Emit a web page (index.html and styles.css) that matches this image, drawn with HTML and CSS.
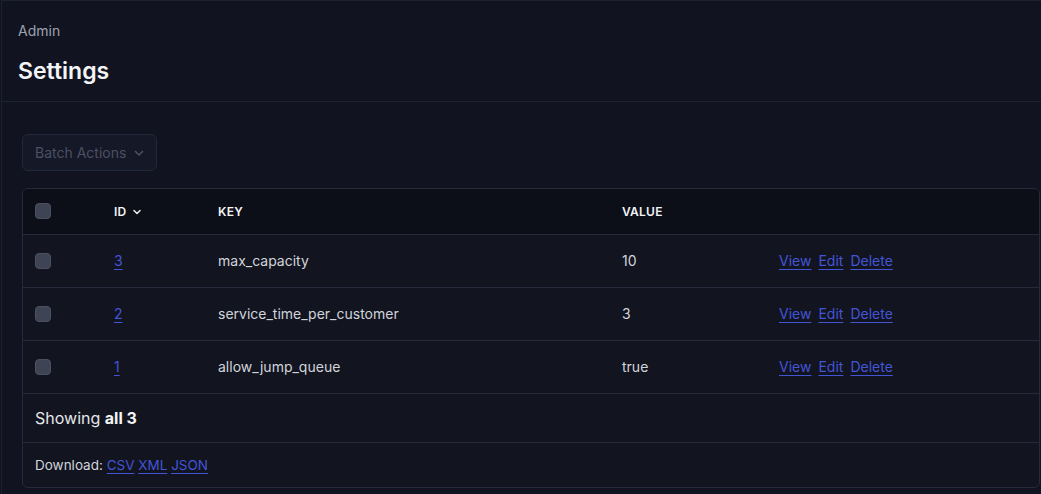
FILE: index.html
```html
<!DOCTYPE html>
<html>
<head>
<meta charset="utf-8">
<link rel="stylesheet" href="styles.css">
</head>
<body>
<div class="page">
  <header class="page-header">
    <div class="crumb">Admin</div>
    <h1 class="title">Settings</h1>
  </header>
  <main class="content">
    <button class="batch"><span>Batch Actions</span>
      <svg class="chev" width="12" height="12" viewBox="0 0 12 12"><path d="M2.5 4.5 6 8l3.5-3.5" fill="none" stroke="currentColor" stroke-width="1.6" stroke-linecap="round" stroke-linejoin="round"/></svg>
    </button>
    <div class="card">
      <table class="grid">
        <thead>
          <tr>
            <th class="c-check"><span class="box"></span></th>
            <th class="c-id">ID <svg class="chev-s" width="10" height="10" viewBox="0 0 10 10"><path d="M2 3.5 5 6.5l3-3" fill="none" stroke="currentColor" stroke-width="1.6" stroke-linecap="round" stroke-linejoin="round"/></svg></th>
            <th class="c-key">KEY</th>
            <th class="c-val">VALUE</th>
            <th class="c-act"></th>
          </tr>
        </thead>
        <tbody>
          <tr>
            <td class="c-check"><span class="box"></span></td>
            <td class="c-id"><a href="#">3</a></td>
            <td class="c-key">max_capacity</td>
            <td class="c-val">10</td>
            <td class="c-act"><span class="actions"><a href="#">View</a><a href="#">Edit</a><a href="#">Delete</a></span></td>
          </tr>
          <tr>
            <td class="c-check"><span class="box"></span></td>
            <td class="c-id"><a href="#">2</a></td>
            <td class="c-key">service_time_per_customer</td>
            <td class="c-val">3</td>
            <td class="c-act"><span class="actions"><a href="#">View</a><a href="#">Edit</a><a href="#">Delete</a></span></td>
          </tr>
          <tr>
            <td class="c-check"><span class="box"></span></td>
            <td class="c-id"><a href="#">1</a></td>
            <td class="c-key">allow_jump_queue</td>
            <td class="c-val">true</td>
            <td class="c-act"><span class="actions"><a href="#">View</a><a href="#">Edit</a><a href="#">Delete</a></span></td>
          </tr>
        </tbody>
      </table>
      <div class="showing">Showing <b>all 3</b></div>
      <div class="download">Download: <a href="#">CSV</a> <a href="#">XML</a> <a href="#">JSON</a></div>
    </div>
  </main>
</div>
</body>
</html>
```
FILE: styles.css
```css
* { box-sizing: border-box; }
html, body { margin: 0; padding: 0; }
body {
  background: #111320;
  font-family: Inter, "Noto Sans", sans-serif;
  font-size: 14px;
  color: #d1d5db;
  width: 1041px;
  height: 494px;
  overflow: hidden;
}
.page {
  border-top: 1px solid #1d2030;
  border-left: 1px solid #1d2030;
  min-height: 494px;
  margin-left: 1px;
}
.page-header {
  padding: 20px 16px 0;
  border-bottom: 1px solid #1f2231;
  height: 101px;
}
.crumb {
  color: #9ca3af;
  font-size: 14px;
  line-height: 20px;
}
.title {
  margin: 16px 0 0;
  font-size: 23px;
  line-height: 28px;
  font-weight: 600;
  color: #f3f4f6;
}
.content {
  padding: 32px 0 0 20px;
}
.batch {
  display: flex;
  align-items: center;
  gap: 7px;
  height: 37px;
  width: 135px;
  padding: 0 12px;
  background: #151826;
  border: 1px solid #23273a;
  border-radius: 6px;
  color: #4b5064;
  font-family: inherit;
  font-size: 14px;
  white-space: nowrap;
}
.chev { color: #4b5064; flex: none; }
.card {
  margin-top: 17px;
  border: 1px solid #262a3b;
  border-radius: 6px;
  overflow: hidden;
  background: #121420;
  width: 1018px;
}
.grid {
  width: 100%;
  border-collapse: collapse;
}
.grid th {
  background: #0c0e18;
  height: 45px;
  text-align: left;
  font-size: 12px;
  font-weight: 600;
  color: #f3f4f6;
  letter-spacing: 0.02em;
  border-bottom: 1px solid #262a3b;
  padding: 0;
}
.grid td {
  height: 53px;
  padding: 0;
  border-bottom: 1px solid #262a3b;
  color: #d1d5db;
}
.c-check { width: 91px; padding-left: 12px !important; }
.c-id { width: 104px; }
.c-key { width: 404px; }
.c-val { width: 157px; }
.box {
  display: block;
  width: 16px;
  height: 16px;
  border-radius: 4px;
  background: #3f4454;
  border: 1px solid #4b5163;
}
.chev-s { color: #e5e7eb; margin-left: 2px; vertical-align: -1px; }
a {
  color: #4255d6;
  text-decoration: underline;
  text-underline-offset: 3px;
}
.actions { display: flex; gap: 7px; }
.showing {
  height: 49px;
  line-height: 48px;
  padding-left: 12px;
  font-size: 16px;
  color: #e5e7eb;
  border-bottom: 1px solid #262a3b;
}
.showing b { font-weight: 700; color: #f3f4f6; }
.download {
  height: 44px;
  line-height: 44px;
  padding-left: 12px;
  font-size: 13.5px;
  color: #d1d5db;
}
```
